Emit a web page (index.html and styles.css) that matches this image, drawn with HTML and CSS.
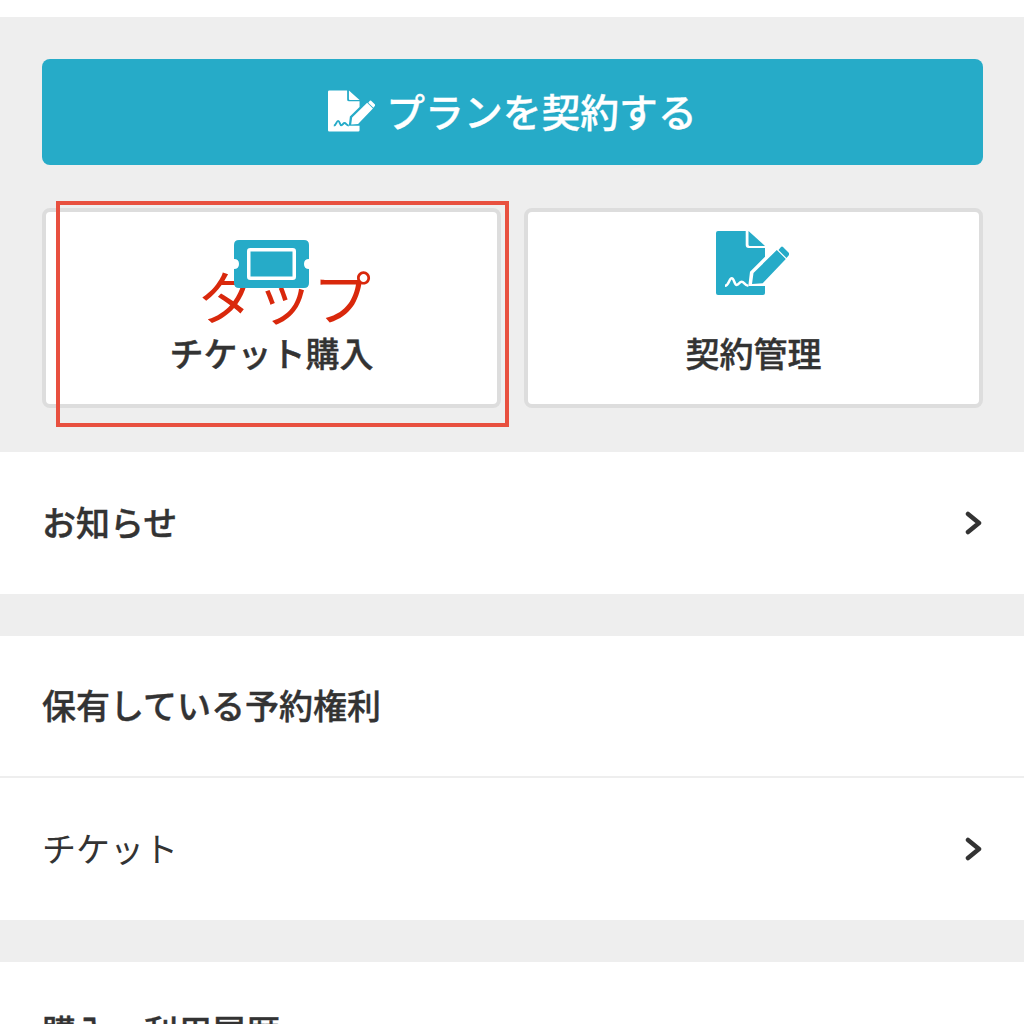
FILE: index.html
```html
<!DOCTYPE html>
<html lang="ja">
<head>
    <meta charset="UTF-8">
    <meta name="viewport" content="width=device-width, initial-scale=1.0">
    <title>チケット購入</title>
    <link rel="stylesheet" href="styles.css">
</head>
<body>
    <div class="top-strip"></div>

    <section class="actions">
        <a class="contract-btn">
            <svg class="contract-icon" viewBox="0 0 73 64">
                <path fill="#fff" d="M2 0H29.700V14q0 3 3 3H49V25.700L34 40.700L32.300 55H49V62q0 2-2 2H2q-2 0-2-2V2q0-2 2-2z"/>
                <path fill="#fff" d="M32.500 0L49 15H34q-1.500 0-1.500-1.500z"/>
                <path fill="#fff" d="M36 53l1.500-11L60.800 19 69.800 28 46.700 52.300zM65 16q1-1 2 0l6 6q1 1 0 2l-2.500 3L62.500 19z"/>
                <path fill="none" stroke="#26abc8" stroke-width="3" d="M9 54.700c4 0 4-7.400 6.700-7.400s2.500 6.700 5 6.700 2.500-3.300 5-3.300 3 4 6.600 4"/>
            </svg>
            <span class="contract-text">プランを契約する</span>
        </a>

        <div class="cards">
            <a class="card">
                <svg class="card-icon ticket-icon" viewBox="0 0 75 48">
                    <path fill="#26abc8" d="M5 0h65q5 0 5 5v14q-5 0-5 5t5 5v14q0 5-5 5H5q-5 0-5-5V29q5 0 5-5t-5-5V5q0-5 5-5z"/>
                    <rect x="14.750" y="9.750" width="45.500" height="28.500" fill="none" stroke="#fff" stroke-width="3.500" rx="1.500"/>
                </svg>
                <span class="card-label">チケット購入</span>
            </a>
            <a class="card">
                <svg class="card-icon sign-icon" viewBox="0 0 73 64">
                    <path fill="#26abc8" d="M2 0H29.700V14q0 3 3 3H49V25.700L34 40.700L32.300 55H49V62q0 2-2 2H2q-2 0-2-2V2q0-2 2-2z"/>
                    <path fill="#26abc8" d="M32.500 0L49 15H34q-1.500 0-1.500-1.500z"/>
                    <path fill="#26abc8" d="M36 53l1.500-11L60.800 19 69.800 28 46.700 52.300zM65 16q1-1 2 0l6 6q1 1 0 2l-2.500 3L62.500 19z"/>
                    <path fill="none" stroke="#fff" stroke-width="2.500" d="M9 54.700c4 0 4-7.400 6.700-7.400s2.500 6.700 5 6.700 2.500-3.300 5-3.300 3 4 6.600 4"/>
                </svg>
                <span class="card-label">契約管理</span>
            </a>
        </div>

        <div class="tap-frame"></div>
        <span class="tap-text">タップ</span>
    </section>

    <a class="row row-bold">
        <span class="row-text">お知らせ</span>
        <svg class="chevron" viewBox="0 0 18 24"><path d="M3 3l11 9-11 9" fill="none" stroke="#333" stroke-width="4.500" stroke-linecap="round" stroke-linejoin="round"/></svg>
    </a>

    <div class="gap"></div>

    <div class="row row-bold row-line"><span class="row-text">保有している予約権利</span></div>
    <a class="row">
        <span class="row-text">チケット</span>
        <svg class="chevron" viewBox="0 0 18 24"><path d="M3 3l11 9-11 9" fill="none" stroke="#333" stroke-width="4.500" stroke-linecap="round" stroke-linejoin="round"/></svg>
    </a>

    <div class="gap"></div>

    <div class="row row-bold row-last"><span class="row-text">購入・利用履歴</span></div>
</body>
</html>
```

FILE: styles.css
```css
html, body {
    height: 1024px;
    overflow: hidden;
}
body {
    margin: 0;
    background-color: #fff;
    color: #333;
    font-family: "Noto Sans CJK JP", "Noto Sans", sans-serif;
}
.top-strip {
    height: 17px;
}
.actions {
    position: relative;
    box-sizing: border-box;
    background-color: #eee;
    height: 435px;
    padding: 42px 41px 0 42px;
}
.contract-btn {
    display: flex;
    align-items: center;
    justify-content: center;
    gap: 11px;
    height: 106px;
    background-color: #26abc8;
    border-radius: 8px;
    color: #fff;
    font-size: 38.800px;
    font-weight: 500;
}
.contract-icon {
    width: 47px;
    height: 42px;
    margin-bottom: 2px;
}
.contract-text {
    margin-bottom: 5px;
    -webkit-text-stroke: 0.3px #fff;
}
.cards {
    display: flex;
    gap: 23px;
    margin-top: 43px;
}
.card {
    flex: 1;
    box-sizing: border-box;
    height: 200px;
    display: flex;
    flex-direction: column;
    align-items: center;
    background-color: #fff;
    border: 4px solid #ddd;
    border-radius: 8px;
}
.card-icon {
    display: block;
}
.ticket-icon {
    position: relative;
    z-index: 1;
    width: 75px;
    height: 48px;
    margin-top: 28px;
    margin-bottom: 40px;
}
.sign-icon {
    width: 73px;
    height: 64px;
    margin-top: 19px;
    margin-right: 2px;
    margin-bottom: 33px;
}
.card-label {
    font-size: 34px;
    font-weight: 500;
    line-height: 50px;
    -webkit-text-stroke: 0.4px #333;
}
.tap-frame {
    position: absolute;
    left: 56px;
    top: 184px;
    width: 445px;
    height: 218px;
    border: 4px solid #e8503f;
}
.tap-text {
    position: absolute;
    left: 197px;
    top: 238px;
    font-size: 58px;
    line-height: 80px;
    color: #d9280c;
}
.row {
    box-sizing: border-box;
    height: 142px;
    padding: 0 41px 0 42px;
    display: flex;
    align-items: center;
    justify-content: space-between;
    font-size: 34px;
    background-color: #fff;
}
.row-text {
    margin-bottom: 4px;
}
.row-bold {
    font-weight: 500;
    -webkit-text-stroke: 0.4px #333;
}
.row-line {
    border-bottom: 2px solid #eee;
}
.row-last {
    height: 62px;
    padding-top: 44px;
    align-items: flex-start;
    overflow: hidden;
}
.chevron {
    width: 18px;
    height: 24px;
}
.gap {
    height: 42px;
    background-color: #eee;
}
```
